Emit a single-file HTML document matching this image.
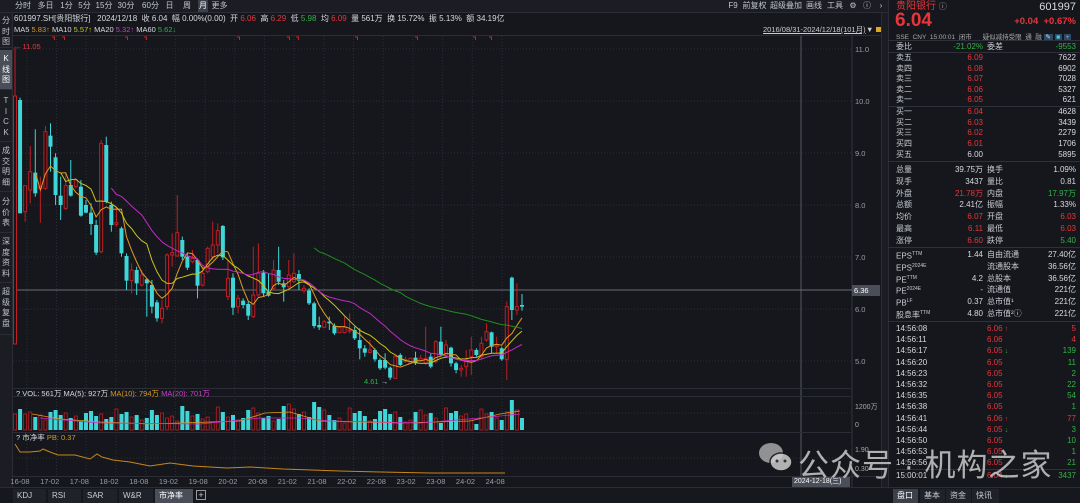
<!DOCTYPE html>
<html><head><meta charset="utf-8">
<style>
*{margin:0;padding:0;box-sizing:border-box}
body{width:1080px;height:503px;background:#15171c;overflow:hidden;position:relative;font-family:"Liberation Sans","Noto Sans CJK SC",sans-serif;font-size:8px;color:#c9ccd2}
.a{position:absolute;white-space:nowrap}
.r{color:#e8353b}.g{color:#2fb344}.y{color:#d99a1e}.m{color:#d23bd2}.w{color:#d7d9dd}
.tab{position:absolute;top:0;height:12px;line-height:12px;text-align:center;font-size:8px;color:#c2c5cb}
.side{position:absolute;left:0;width:12px;text-align:center;font-size:8px;line-height:10.5px;color:#bfc2c8;border-bottom:1px solid #2a2d35}
.row{position:absolute;left:8px;right:4px;height:11px;line-height:11px;font-size:8px}
.row span{position:absolute}
.sep{position:absolute;left:888px;width:192px;height:1px;background:#2e3139}
.bt{position:absolute;top:489px;height:14px;line-height:14px;font-size:8px;background:#1f2228;color:#c9ccd2;padding-left:4px}
</style></head><body>
<div class="a" style="left:0;top:0;width:888px;height:13px;background:#1b1d23;border-bottom:1px solid #2a2d35"></div>
<div class="tab" style="left:13px;width:20px">分时</div>
<div class="tab" style="left:34px;width:23px">多日</div>
<div class="tab" style="left:58px;width:17px">1分</div>
<div class="tab" style="left:76px;width:17px">5分</div>
<div class="tab" style="left:94px;width:20px">15分</div>
<div class="tab" style="left:115px;width:22px">30分</div>
<div class="tab" style="left:139px;width:23px">60分</div>
<div class="tab" style="left:163px;width:13px">日</div>
<div class="tab" style="left:177px;width:20px">周</div>
<div class="tab" style="left:198px;width:10px;background:#3c404a;color:#fff">月</div>
<div class="tab" style="left:209px;width:21px">更多</div>
<div class="tab" style="left:726px;width:14px">F9</div>
<div class="tab" style="left:741px;width:27px">前复权</div>
<div class="tab" style="left:769px;width:34px">超级叠加</div>
<div class="tab" style="left:805px;width:18px">画线</div>
<div class="tab" style="left:826px;width:18px">工具</div>
<div class="tab" style="left:848px;width:10px">⚙</div>
<div class="tab" style="left:862px;width:10px">ⓘ</div>
<div class="tab" style="left:877px;width:8px">›</div>
<div class="a" style="left:0;top:13px;width:13px;height:474px;background:#1b1d23;border-right:1px solid #2a2d35"></div>
<div class="side" style="top:16px;height:32px">分<br>时<br>图</div>
<div class="side" style="top:50px;height:40px;background:#4a4e58;color:#fff;padding-top:4px">K<br>线<br>图</div>
<div class="side" style="top:94px;height:48px;padding-top:2px">T<br>I<br>C<br>K</div>
<div class="side" style="top:144px;height:48px;padding-top:2px">成<br>交<br>明<br>细</div>
<div class="side" style="top:195px;height:38px;padding-top:2px">分<br>价<br>表</div>
<div class="side" style="top:235px;height:48px;padding-top:2px">深<br>度<br>资<br>料</div>
<div class="side" style="top:285px;height:50px;padding-top:2px">超<br>级<br>复<br>盘</div>
<div class="a w" style="left:14px;top:14px;font-size:8px;line-height:10px">601997.SH[贵阳银行] &nbsp; 2024/12/18 &nbsp;收 6.04 &nbsp;幅 0.00%(0.00) &nbsp;开 <span class="r">6.06</span> &nbsp;高 <span class="r">6.29</span> &nbsp;低 <span class="g">5.98</span> &nbsp;均 <span class="r">6.09</span> &nbsp;量 561万 &nbsp;换 15.72% &nbsp;振 5.13% &nbsp;额 34.19亿</div>
<div class="a w" style="left:14px;top:25px;font-size:7.5px;line-height:9px">MA5 <span class="y">5.83↑</span> MA10 <span style="color:#c8c41a">5.57↑</span> MA20 <span class="m">5.32↑</span> MA60 <span class="g">5.62↓</span></div>
<div class="a" style="left:763px;top:25px;font-size:7.5px;line-height:9px;text-decoration:underline;color:#c9ccd2">2016/08/31-2024/12/18(101月)</div>
<div class="a" style="left:866px;top:25px;font-size:7.5px;line-height:9px;color:#ccc">▼</div>
<div class="a" style="left:876px;top:27px;width:6px;height:5px;background:#e0a81e"></div>
<div class="a" style="left:13px;top:35px;width:875px;height:1px;background:#2a2d35"></div>
<svg id="ch" class="a" style="left:0;top:0" width="888" height="503"></svg>
<div class="a r" style="left:15px;top:42px;font-size:7.5px">←11.05</div>
<div class="a g" style="left:364px;top:377px;font-size:7.5px">4.61 <span style="color:#ccc">→</span></div>
<div class="a" style="left:852px;top:285px;width:28px;height:11px;background:#4a4e58;color:#fff;font-size:7.5px;line-height:11px;padding-left:2px">6.36</div>
<div class="a w" style="left:13px;top:388px;width:839px;height:9px;border-top:1px solid #2a2d35;border-bottom:1px solid #2a2d35;font-size:7.5px;line-height:9px;padding-left:3px">? VOL: 561万 MA(5): 927万 <span class="y">MA(10): 794万</span> <span class="m">MA(20): 701万</span></div>
<div class="a" style="left:855px;top:402px;font-size:7px;color:#aaa">1200万</div>
<div class="a" style="left:855px;top:422px;font-size:7px;color:#aaa">0</div>
<div class="a w" style="left:13px;top:432px;width:839px;height:10px;border-top:1px solid #2a2d35;font-size:7.5px;line-height:10px;padding-left:3px">? 市净率 <span class="y">PB: 0.37</span></div>
<div class="a" style="left:855px;top:447px;font-size:7px;color:#aaa">1.90</div>
<div class="a" style="left:855px;top:466px;font-size:7px;color:#aaa">0.30</div>
<div class="a" style="left:13px;top:476px;width:875px;height:1px;background:#2a2d35"></div>
<div class="a" style="left:792px;top:477px;width:58px;height:10px;background:#4a4e58;color:#fff;font-size:7px;line-height:10px;padding-left:2px">2024-12-18(三)</div>
<div class="a" style="left:0;top:487px;width:888px;height:16px;background:#16181d;border-top:1px solid #2a2d35"></div>
<div class="bt" style="left:13px;width:33px">KDJ</div>
<div class="bt" style="left:48px;width:33px">RSI</div>
<div class="bt" style="left:83px;width:34px">SAR</div>
<div class="bt" style="left:119px;width:34px">W&amp;R</div>
<div class="bt" style="left:155px;width:38px;background:#4a4e58;color:#fff">市净率</div>
<div class="a" style="left:196px;top:490px;width:10px;height:10px;border:1px solid #999;color:#ccc;font-size:9px;line-height:8px;text-align:center">+</div>
<div class="a" style="left:881px;top:13px;width:7px;height:474px;background:#1b1d23;border-left:1px solid #2a2d35"></div>
<div class="a" style="left:888px;top:0;width:192px;height:503px;background:#15171c;border-left:1px solid #2a2d35"></div>
<div class="a r" style="left:896px;top:1px;font-size:10px;line-height:12px">贵阳银行 <span style="color:#aaa;font-size:8px">ⓘ</span></div>
<div class="a" style="right:4px;top:1px;font-size:11px;line-height:12px;color:#d7d9dd">601997</div>
<div class="a r" style="left:895px;top:13px;font-size:19px;font-weight:bold;line-height:16px">6.04</div>
<div class="a r" style="right:4px;top:16px;font-size:9.5px;font-weight:bold;line-height:11px">+0.04 &nbsp;+0.67%</div>
<div class="a" style="left:896px;top:31px;font-size:6.5px;color:#aaa">SSE &nbsp;CNY &nbsp;15:00:01 &nbsp;闭市 &nbsp;&nbsp;&nbsp;&nbsp;&nbsp;疑似减持受限 &nbsp;通 &nbsp;融 <span style="background:#2a4a6a;color:#ddd">&nbsp;✎&nbsp;</span> <span style="background:#2a4a6a;color:#4cd">&nbsp;■&nbsp;</span> <span style="background:#2a4a6a">&nbsp;+&nbsp;</span></div>
<div class="sep" style="top:40px"></div>
<div id="rpx"></div>
<svg class="a" style="left:758px;top:440px" width="36" height="36" viewBox="0 0 36 36"><ellipse cx="13" cy="13" rx="12" ry="10" fill="#bbb" opacity=".75"/><ellipse cx="23" cy="22" rx="11" ry="9" fill="#ccc" opacity=".85" stroke="#15171c" stroke-width="1.5"/><circle cx="19" cy="21" r="1.5" fill="#333"/><circle cx="27" cy="21" r="1.5" fill="#333"/></svg>
<div class="a" style="left:798px;top:440px;font-size:31px;color:rgba(215,215,215,.8);letter-spacing:1px">公众号 · 机构之家</div>
<script>
var S=document.getElementById('ch'),NS='http://www.w3.org/2000/svg';
function el(t,a){var e=document.createElementNS(NS,t);for(var k in a)e.setAttribute(k,a[k]);S.appendChild(e);return e}
for(var p=5;p<=11;p++){var y=49+(11-p)*52;el('line',{x1:13,x2:852,y1:y,y2:y,stroke:'#2b2e36','stroke-dasharray':'1,2'});var t=el('text',{x:855,y:y+3,fill:'#9a9da4','font-size':7.5});t.textContent=p.toFixed(1)}
el('line',{x1:13,x2:852,y1:413,y2:413,stroke:'#2b2e36','stroke-dasharray':'1,2'});
el('line',{x1:13,x2:852,y1:458,y2:458,stroke:'#2b2e36','stroke-dasharray':'1,2'});
for(var x=502;x>13;x-=29.7){el('line',{x1:x,x2:x,y1:36,y2:476,stroke:'#2b2e36','stroke-dasharray':'1,2'})}
el('line',{x1:852,x2:852,y1:36,y2:487,stroke:'#33363e'});
el('line',{x1:801,x2:801,y1:36,y2:477,stroke:'#55585f'});
el('line',{x1:13,x2:852,y1:290,y2:290,stroke:'#6a6d74'});
[52,62,125,144,237,287,296,355,415,473,489].forEach(function(x){el('path',{d:'M'+x+' 37h2.5v3',stroke:'#d02020',fill:'none','stroke-width':1})});
var D=`r 168 912 20 912,c 180 520 173 520,r 437 515 437 545,r 395 450 318 490,c 398 460 268 470,r 440 446 410 548,r 275 445 258 450,c 287 320 250 395,c 352 465 340 495,c 467 495 410 540,r 437 505 400 510,c 435 467 360 470,r 420 440 415 445,c 440 527 420 530,c 495 518 480 520,c 518 552 490 585,c 555 638 540 645,r 310 635 300 640,c 315 485 290 490,c 495 555 485 575,r 548 553 500 560,c 565 640 560 650,c 648 722 640 750,r 690 722 670 760,c 690 730 680 765,r 705 735 690 740,c 718 730 715 830,c 735 800 720 820,c 787 835 780 845,r 805 835 780 850,r 645 800 640 810,r 638 645 580 680,r 578 648 465 650,c 600 650 590 660,c 650 683 640 690,r 655 665 630 670,c 660 737 655 775,r 700 735 680 740,r 625 695 620 700,r 615 650 545 660,r 572 615 550 640,c 558 652 555 660,r 715 770 660 780,c 713 803 700 825,r 775 800 765 820,c 782 795 775 805,c 792 827 785 840,r 765 830 620 835,r 700 765 610 770,c 698 760 690 770,c 755 767 700 770,r 690 745 660 750,c 690 725 620 735,c 730 742 720 785,r 705 740 660 745,r 700 725 640 730,c 702 722 690 750,r 745 752 735 760,c 752 790 745 795,c 790 858 785 865,c 855 862 830 870,r 845 862 840 865,c 845 850 830 870,c 857 880 850 885,r 862 878 860 880,r 862 878 830 880,r 870 872 820 880,c 870 895 860 900,c 900 925 865 958,c 925 938 915 950,r 930 937 900 940,c 930 958 925 965,c 960 985 955 990,c 960 983 940 988,c 983 1013 980 1020,r 950 1015 945 1015,c 945 975 940 978,r 958 965 950 968,r 955 970 953 972,c 953 970 935 975,r 955 962 945 965,r 955 970 860 975,c 950 980 940 985,r 905 965 900 970,c 905 945 860 950,r 915 945 900 950,c 923 970 920 980,c 970 990 965 1000,r 985 990 975 1010,r 960 980 930 1010,r 930 950 890 1005,c 930 945 925 950,r 910 950 890 955,r 875 900 850 905,c 877 920 875 940,r 915 920 890 940,c 925 958 920 962,r 800 958 785 1020,c 713 810 710 840,r 800 810 730 825,c 795 800 762 812`.split(',').map(function(s){var a=s.split(' ');return [a[0],+a[1]/3+40,+a[2]/3+40,+a[3]/3+40,+a[4]/3+40]});
var RED='#c21d22',CY='#3ed6d8',C=[];
D.forEach(function(d,i){var x=15+i*5.07,red=d[0]=='r',col=red?RED:CY;
 C.push(red?d[1]:d[2]);
 el('line',{x1:x,x2:x,y1:d[3],y2:d[4],stroke:col,'stroke-width':1});
 var h=Math.max(d[2]-d[1],1);
 if(red)el('rect',{x:x-1.5,y:d[1],width:3,height:h,fill:'#15171c',stroke:col,'stroke-width':1});
 else el('rect',{x:x-2,y:d[1],width:4,height:h,fill:col});
 var v=6+((i*37)%13)+((i*11)%7);
 if(i==0)v=16;if(i>=95)v=[14,12,10,18,30,20,12][i-94]||12;
 if(i>=53&&i<=60)v+=5;
 if(red)el('rect',{x:x-1.5,y:430-v,width:3,height:v,fill:'#15171c',stroke:RED,'stroke-width':.8});
 else el('rect',{x:x-2,y:430-v,width:4,height:v,fill:CY});
});
function ma(n,col){var pts=[];for(var i=n-1;i<C.length;i++){var s=0;for(var j=0;j<n;j++)s+=C[i-j];pts.push((15+i*5.07).toFixed(1)+','+(s/n).toFixed(1))}
 el('polyline',{points:pts.join(' '),fill:'none',stroke:col,'stroke-width':1})}
ma(5,'#e39a1c');ma(10,'#c9c41a');ma(20,'#c828c8');ma(60,'#1d8f1d');
el('polyline',{points:'32,414 60,419 100,422 150,424 240,421 265,413 290,412 320,421 400,423 470,421 500,414 520,411',fill:'none',stroke:'#e39a1c','stroke-width':.8});
el('polyline',{points:'40,418 100,423 200,424 260,418 300,418 330,421 420,423 480,418 520,414',fill:'none',stroke:'#c828c8','stroke-width':.8});
el('polyline',{points:'15,444 20,452 30,452 40,451 43,449 50,452 58,455 75,455 90,459 97,454 102,457 113,460 130,462 150,466 170,463 193,466 227,468 250,467 283,469 340,471 380,472 430,473 505,473',fill:'none',stroke:'#c8861a','stroke-width':1});
var L='16-08 17-02 17-08 18-02 18-08 19-02 19-08 20-02 20-08 21-02 21-08 22-02 22-08 23-02 23-08 24-02 24-08'.split(' ');
L.forEach(function(s,k){var t=el('text',{x:20+k*29.7,y:484,fill:'#9a9da4','font-size':7.5,'text-anchor':'middle'});t.textContent=s});
var R=document.getElementById('rpx'),h='';
function row(y,a,b,bc,c,d,dc){h+='<div class="row" style="left:896px;width:180px;top:'+(y-5)+'px"><span style="left:0">'+a+'</span><span class="'+(bc||'w')+'" style="right:93px">'+b+'</span>'+(c?'<span style="left:91px">'+c+'</span>':'')+'<span class="'+(dc||'w')+'" style="right:0">'+d+'</span></div>'}
row(46,'委比','-21.02%','g','委差','-9553','g');
h+='<div class="sep" style="top:52px"></div>';
[['卖五','6.09',7622],['卖四','6.08',6902],['卖三','6.07',7028],['卖二','6.06',5327],['卖一','6.05',621]].forEach(function(r,i){row(57+i*10.6,r[0],r[1],'r','',r[2])});
h+='<div class="sep" style="top:106px"></div>';
[['买一','6.04',4628],['买二','6.03',3439],['买三','6.02',2279],['买四','6.01',1706],['买五','6.00',5895]].forEach(function(r,i){row(111+i*10.7,r[0],r[1],i==4?'w':'r','',r[2])});
h+='<div class="sep" style="top:161px"></div>';
var st=[['总量','39.75万','w','换手','1.09%','w'],['现手','3437','w','量比','0.81','w'],['外盘','21.78万','r','内盘','17.97万','g'],['总额','2.41亿','w','振幅','1.33%','w'],['均价','6.07','r','开盘','6.03','r'],['最高','6.11','r','最低','6.03','r'],['涨停','6.60','r','跌停','5.40','g']];
st.forEach(function(r,i){row(169+i*11.8,r[0],r[1],r[2],r[3],r[4],r[5])});
h+='<div class="sep" style="top:247px"></div>';
var ep=[['EPS<sup style="font-size:5px">TTM</sup>','1.44','自由流通','27.40亿'],['EPS<sup style="font-size:5px">2024E</sup>','','流通股本','36.56亿'],['PE<sup style="font-size:5px">TTM</sup>','4.2','总股本','36.56亿'],['PE<sup style="font-size:5px">2024E</sup>','-','流通值','221亿'],['PB<sup style="font-size:5px">LF</sup>','0.37','总市值¹','221亿'],['股息率<sup style="font-size:5px">TTM</sup>','4.80','总市值²ⓘ','221亿']];
ep.forEach(function(r,i){row(254+i*11.8,r[0],r[1],'w',r[2],r[3],'w')});
h+='<div class="sep" style="top:321px"></div>';
var tk=[['14:56:08','6.06','↑',5,'r'],['14:56:11','6.06','',4,'r'],['14:56:17','6.05','↓',139,'g'],['14:56:20','6.05','',11,'g'],['14:56:23','6.05','',2,'g'],['14:56:32','6.05','',22,'g'],['14:56:35','6.05','',54,'g'],['14:56:38','6.05','',1,'g'],['14:56:41','6.06','↑',77,'r'],['14:56:44','6.05','↓',3,'g'],['14:56:50','6.05','',10,'g'],['14:56:53','6.05','',1,'g'],['14:56:56','6.05','',21,'g'],['15:00:01','6.04','↓',3437,'g']];
tk.forEach(function(r,i){var y=328+i*11.2+(i==13?1:0);h+='<div class="row" style="left:896px;width:180px;top:'+(y-5)+'px"><span class="w" style="left:0">'+r[0]+'</span><span class="r" style="left:91px">'+r[1]+' <b class="'+(r[2]=='↑'?'r':'g')+'" style="font-size:7px">'+r[2]+'</b></span><span class="'+r[4]+'" style="right:0">'+r[3]+'</span></div>'});
h+='<div class="sep" style="top:469px;left:896px;width:180px"></div>';
h+='<div class="a" style="left:888px;top:487px;width:192px;height:16px;background:#16181d;border-top:1px solid #2a2d35"></div>';
[['盘口',893,25,1],['基本',920,25],['资金',946,25],['快讯',972,27]].forEach(function(b){h+='<div class="bt" style="left:'+b[1]+'px;width:'+b[2]+'px;'+(b[3]?'background:#3c404a;color:#fff':'')+'">'+b[0]+'</div>'});
R.innerHTML=h;
</script>
</body></html>
